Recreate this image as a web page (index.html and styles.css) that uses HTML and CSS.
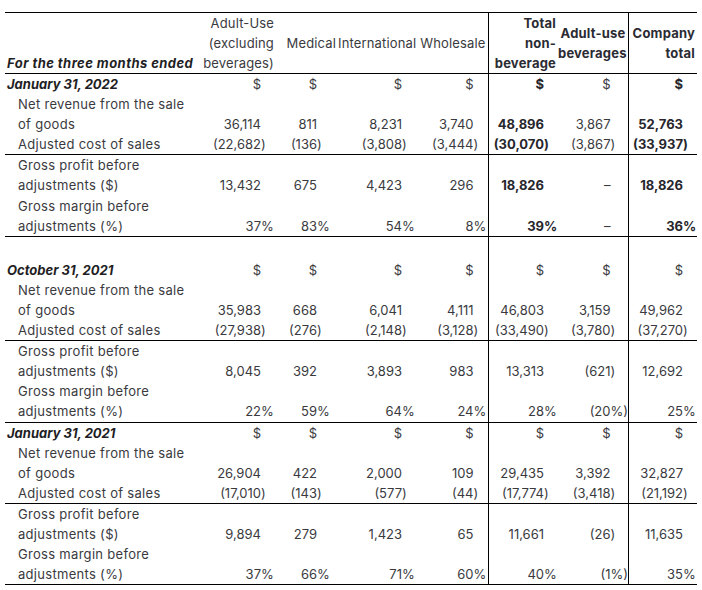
FILE: index.html
```html
<!DOCTYPE html>
<html lang="en">
<head>
<meta charset="utf-8">
<title>Gross profit before adjustments</title>
<link rel="stylesheet" href="styles.css">
</head>
<body>
<table class="fin">
  <colgroup>
    <col class="w-label"><col class="w-au"><col class="w-med"><col class="w-int">
    <col class="w-whl"><col class="w-tot"><col class="w-bev"><col class="w-co">
  </colgroup>
  <thead>
    <tr>
      <th class="lab">For the three months ended</th>
      <th class="fill">Adult-Use<br>(excluding<br>beverages)</th>
      <th class="reg">Medical</th>
      <th class="reg">International</th>
      <th class="reg">Wholesale</th>
      <th class="fill">Total<br>non-<br>beverage</th>
      <th>Adult-use<br>beverages</th>
      <th>Company<br>total</th>
    </tr>
  </thead>
  <tbody>
    <tr class="date">
      <td>January 31, 2022</td>
      <td>$</td><td>$</td><td>$</td><td>$</td><td class="b">$</td><td>$</td><td class="b">$</td>
    </tr>
    <tr>
      <td class="ind">Net revenue from the sale<br>of goods</td>
      <td>36,114</td><td>811</td><td>8,231</td><td>3,740</td><td class="b">48,896</td><td>3,867</td><td class="b">52,763</td>
    </tr>
    <tr class="rule">
      <td class="ind">Adjusted cost of sales</td>
      <td>(22,682<span class="sx">)</span></td><td>(136<span class="sx">)</span></td><td>(3,808<span class="sx">)</span></td><td>(3,444<span class="sx">)</span></td><td class="b">(30,070<span class="sx">)</span></td><td>(3,867<span class="sx">)</span></td><td class="b">(33,937<span class="sx">)</span></td>
    </tr>
    <tr>
      <td class="ind">Gross profit before<br>adjustments ($)</td>
      <td>13,432</td><td>675</td><td>4,423</td><td>296</td><td class="b">18,826</td><td>–</td><td class="b">18,826</td>
    </tr>
    <tr class="rule">
      <td class="ind">Gross margin before<br>adjustments (%)</td>
      <td>37<span class="sx">%</span></td><td>83<span class="sx">%</span></td><td>54<span class="sx">%</span></td><td>8<span class="sx">%</span></td><td class="b">39<span class="sx">%</span></td><td>–</td><td class="b">36<span class="sx">%</span></td>
    </tr>
    <tr class="gap">
      <td></td><td></td><td></td><td></td><td></td><td></td><td></td><td></td>
    </tr>

    <tr class="date">
      <td>October 31, 2021</td>
      <td>$</td><td>$</td><td>$</td><td>$</td><td>$</td><td>$</td><td>$</td>
    </tr>
    <tr>
      <td class="ind">Net revenue from the sale<br>of goods</td>
      <td>35,983</td><td>668</td><td>6,041</td><td>4,111</td><td>46,803</td><td>3,159</td><td>49,962</td>
    </tr>
    <tr class="rule">
      <td class="ind">Adjusted cost of sales</td>
      <td>(27,938<span class="sx">)</span></td><td>(276<span class="sx">)</span></td><td>(2,148<span class="sx">)</span></td><td>(3,128<span class="sx">)</span></td><td>(33,490<span class="sx">)</span></td><td>(3,780<span class="sx">)</span></td><td>(37,270<span class="sx">)</span></td>
    </tr>
    <tr>
      <td class="ind">Gross profit before<br>adjustments ($)</td>
      <td>8,045</td><td>392</td><td>3,893</td><td>983</td><td>13,313</td><td>(621<span class="sx">)</span></td><td>12,692</td>
    </tr>
    <tr class="rule">
      <td class="ind">Gross margin before<br>adjustments (%)</td>
      <td>22<span class="sx">%</span></td><td>59<span class="sx">%</span></td><td>64<span class="sx">%</span></td><td>24<span class="sx">%</span></td><td>28<span class="sx">%</span></td><td>(20<span class="sx">%)</span></td><td>25<span class="sx">%</span></td>
    </tr>

    <tr class="date">
      <td>January 31, 2021</td>
      <td>$</td><td>$</td><td>$</td><td>$</td><td>$</td><td>$</td><td>$</td>
    </tr>
    <tr>
      <td class="ind">Net revenue from the sale<br>of goods</td>
      <td>26,904</td><td>422</td><td>2,000</td><td>109</td><td>29,435</td><td>3,392</td><td>32,827</td>
    </tr>
    <tr class="rule">
      <td class="ind">Adjusted cost of sales</td>
      <td>(17,010<span class="sx">)</span></td><td>(143<span class="sx">)</span></td><td>(577<span class="sx">)</span></td><td>(44<span class="sx">)</span></td><td>(17,774<span class="sx">)</span></td><td>(3,418<span class="sx">)</span></td><td>(21,192<span class="sx">)</span></td>
    </tr>
    <tr>
      <td class="ind">Gross profit before<br>adjustments ($)</td>
      <td>9,894</td><td>279</td><td>1,423</td><td>65</td><td>11,661</td><td>(26<span class="sx">)</span></td><td>11,635</td>
    </tr>
    <tr class="rule">
      <td class="ind">Gross margin before<br>adjustments (%)</td>
      <td>37<span class="sx">%</span></td><td>66<span class="sx">%</span></td><td>71<span class="sx">%</span></td><td>60<span class="sx">%</span></td><td>40<span class="sx">%</span></td><td>(1<span class="sx">%)</span></td><td>35<span class="sx">%</span></td>
    </tr>
  </tbody>
</table>
</body>
</html>
```

FILE: styles.css
```css
html, body {
  margin: 0;
  padding: 0;
  background: #ffffff;
}

body {
  font-family: Inter, "Noto Sans", "Liberation Sans", sans-serif;
  font-size: 13px;
  line-height: 20.1px;
  color: #3a3a3e;
}

.fin {
  margin: 12px 0 0 5px;
  width: 692px;
  table-layout: fixed;
  border-collapse: collapse;
  border-top: 1px solid #000;
}

.w-label { width: 196px; }
.w-au { width: 75px; }
.w-med { width: 62px; }
.w-int { width: 80px; }
.w-whl { width: 70px; }
.w-tot { width: 70px; }
.w-bev { width: 70px; }
.w-co { width: 69px; }

.fin th,
.fin td {
  padding: 0;
  white-space: nowrap;
}

.fin thead tr {
  border-bottom: 1px solid #000;
}

.fin th {
  font-weight: 400;
  text-align: right;
  vertical-align: middle;
  padding-right: 2px;
  height: 60px;
  line-height: 20px;
  letter-spacing: 0.15px;
}

.fin th.lab {
  text-align: left;
  vertical-align: bottom;
  padding-left: 2px;
  font-weight: 700;
  font-style: italic;
  color: #1e1e24;
  letter-spacing: 0.45px;
}

.fin th:nth-child(n+6) {
  font-weight: 700;
  color: #2b2b33;
  letter-spacing: 0.2px;
}

.fin th:nth-child(6),
.fin td:nth-child(6),
.fin th:nth-child(8),
.fin td:nth-child(8) {
  border-left: 1px solid #000;
}

.fin td {
  text-align: right;
  vertical-align: bottom;
}

.fin td:first-child {
  text-align: left;
  padding-left: 2px;
}

.fin td.ind {
  padding-left: 13px;
  letter-spacing: 0.3px;
}

.fin tr.date td:first-child {
  font-weight: 700;
  font-style: italic;
  color: #1e1e24;
}

.fin td.b {
  font-weight: 700;
  color: #26262c;
}

.fin td:nth-child(2) { padding-right: 15px; }
.fin td:nth-child(3) { padding-right: 21px; }
.fin td:nth-child(4) { padding-right: 16px; }
.fin td:nth-child(5) { padding-right: 14px; }
.fin td:nth-child(6) { padding-right: 14px; }
.fin td:nth-child(7) { padding-right: 17px; }
.fin td:nth-child(8) { padding-right: 14px; }

.sx {
  display: inline-block;
  width: 0;
  text-align: left;
  white-space: nowrap;
}

.fin tr.rule {
  border-bottom: 1px solid #000;
}

.fin tr.gap td {
  height: 23px;
}
```
